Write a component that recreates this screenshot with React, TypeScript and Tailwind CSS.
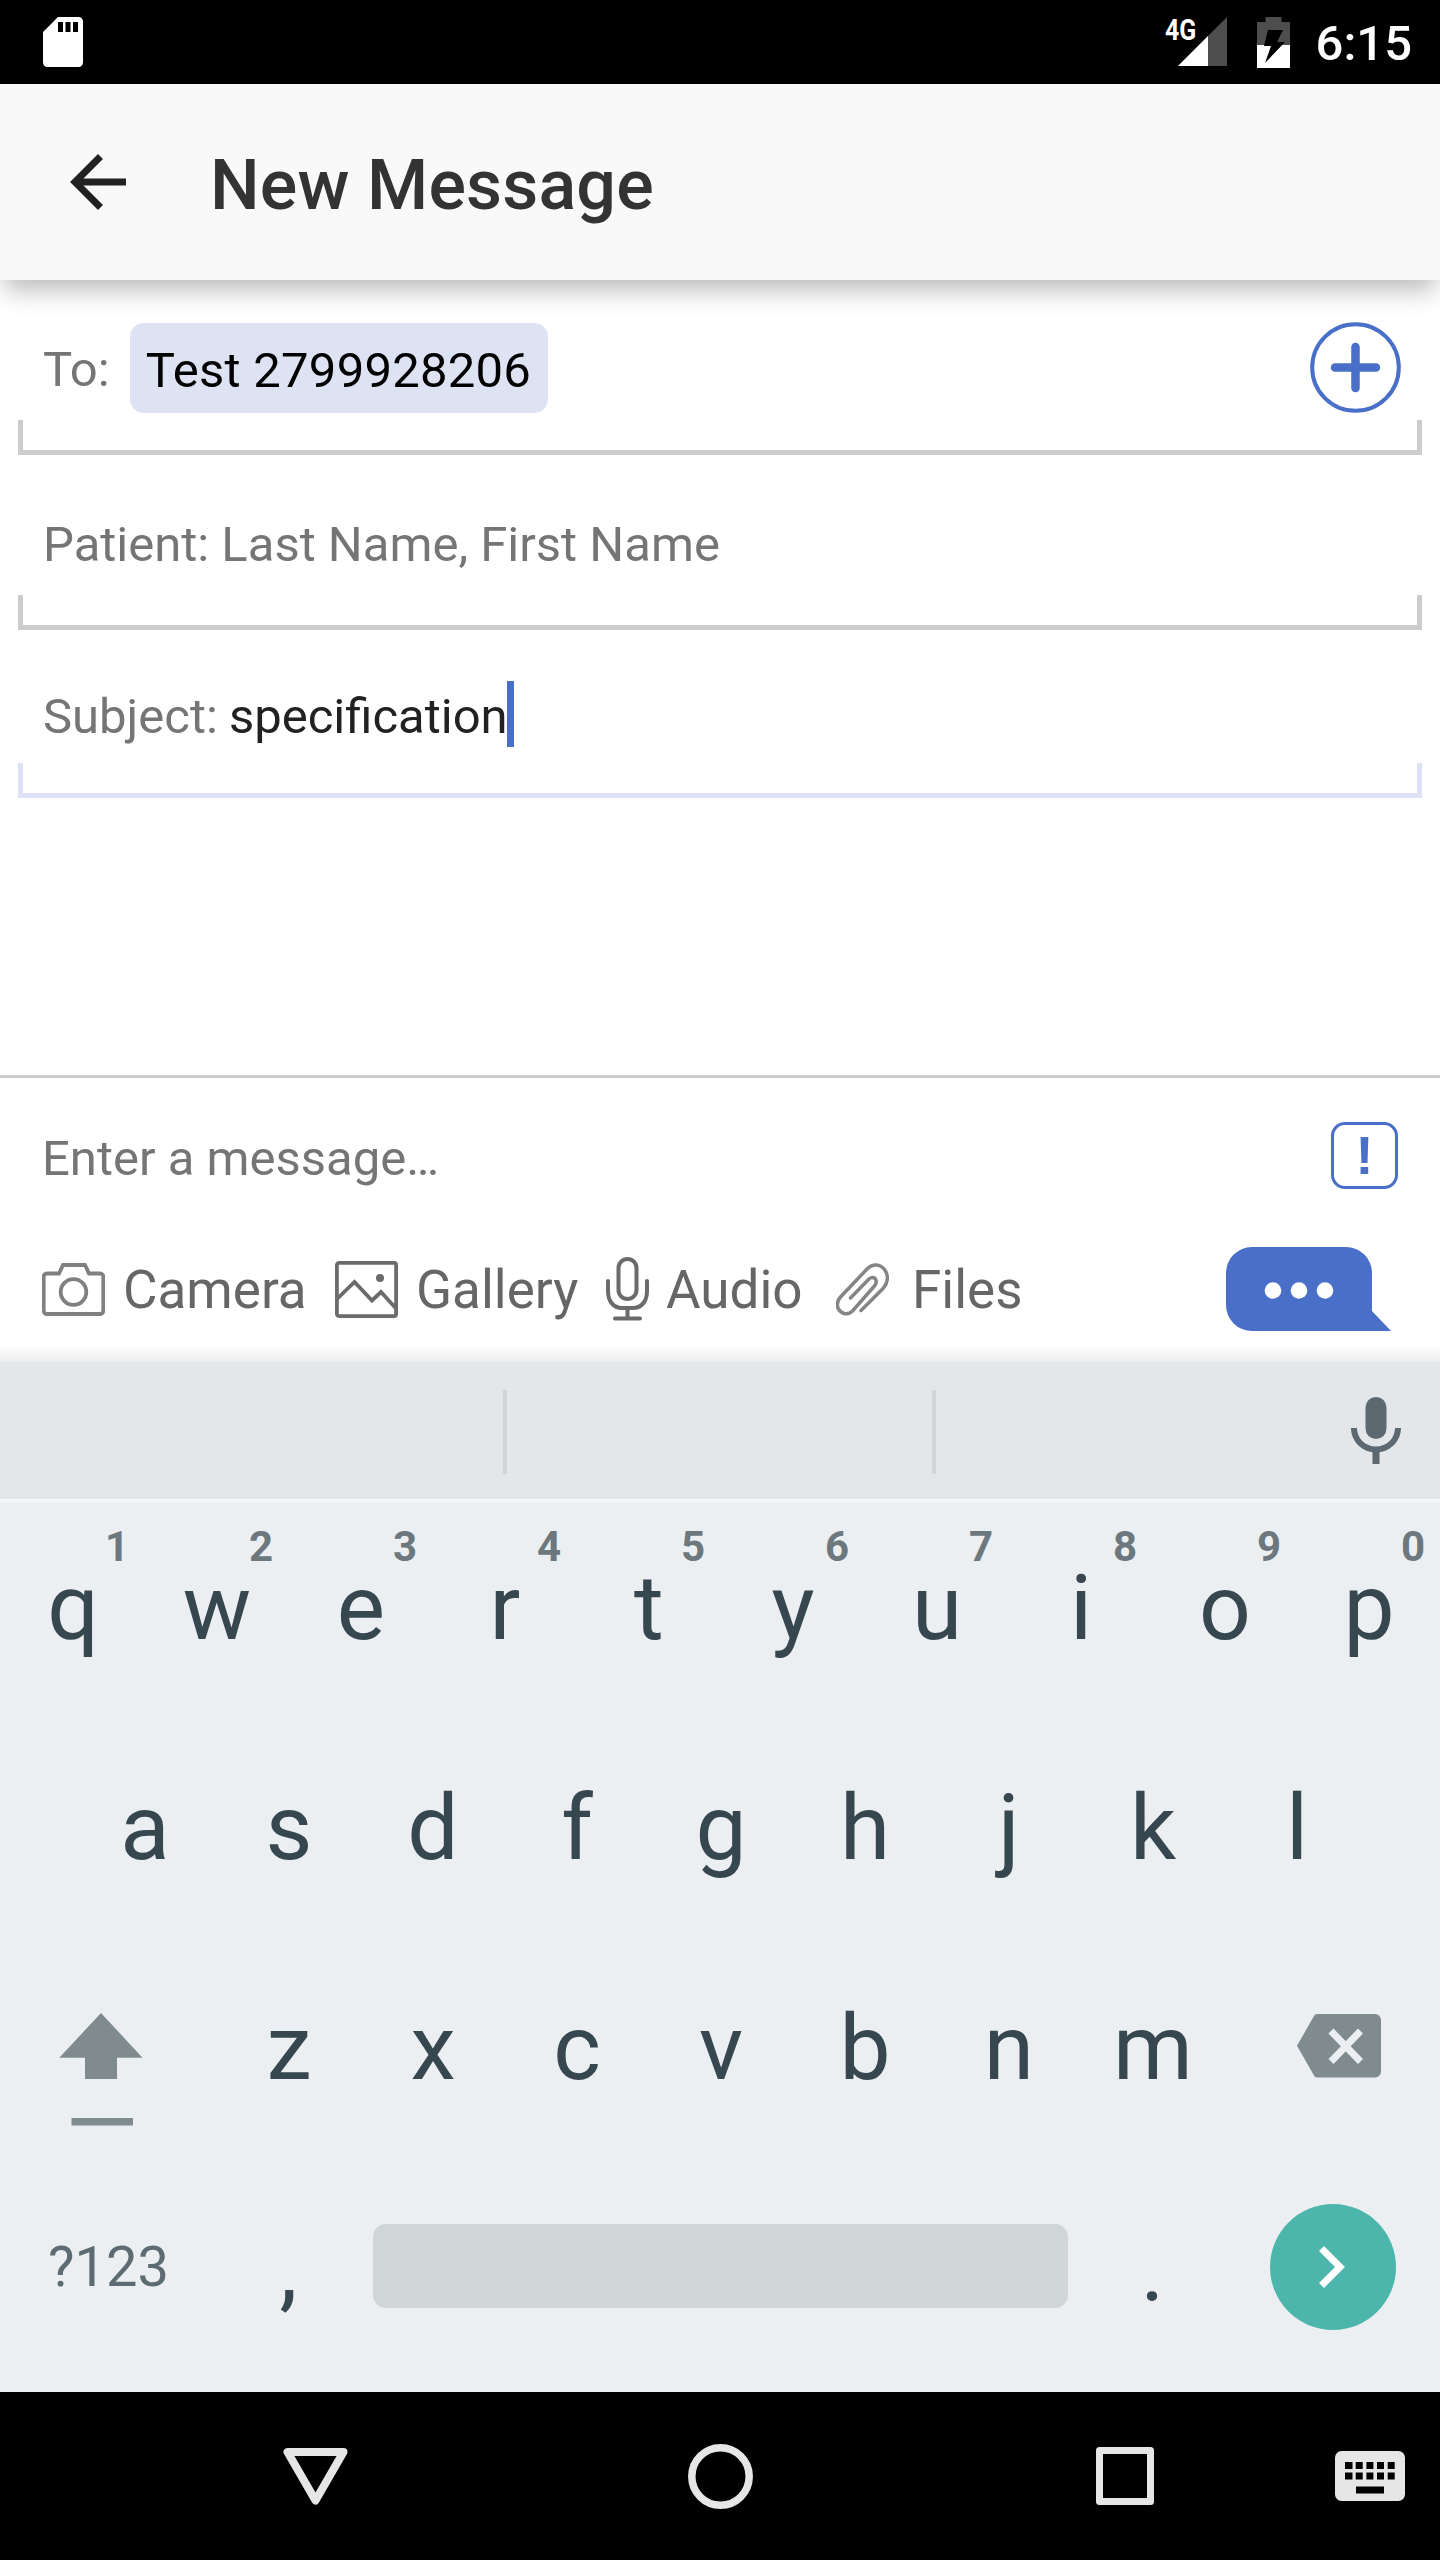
import type { ReactNode } from "react";

function StatusBar() {
  return (
    <div className="flex h-[84px] items-center bg-black pl-[43px] pr-[28px] text-white">
      <svg width="40" height="50" viewBox="0 0 40 50" fill="#fff">
        <path d="M15 0h20.500a4.500 4.500 0 0 1 4.500 4.500v41a4.500 4.500 0 0 1-4.500 4.500h-31a4.500 4.500 0 0 1-4.500-4.500V15z" />
        <path d="M15 5h5v10h-5zM22.500 5h5v10h-5zM30 5h5v10h-5z" fill="#000" />
      </svg>
      <div className="relative ml-auto h-[50px] w-[62px]">
        <span className="absolute left-0 top-0 origin-left scale-x-[0.83] text-[30px] font-bold leading-[26px]">4G</span>
        <svg className="absolute right-0 top-0" width="49" height="50" viewBox="0 0 49 50">
          <path d="M49 0v49H0z" fill="#4d4d4d" />
          <path d="M30 19v30H0z" fill="#fff" />
        </svg>
      </div>
      <svg className="ml-[30px]" width="33" height="51" viewBox="0 0 33 51">
        <path d="M8.500 0h16v5H33v23H0V5h8.500z" fill="#4d4d4d" />
        <path d="M0 28h33v23H0z" fill="#fff" />
        <path d="M11 13h15l-6 12h8L8 46l6-17H7z" fill="#000" />
      </svg>
      <span className="ml-[26px] pt-[4px] text-[49px] font-medium leading-[80px]">6:15</span>
    </div>
  );
}

function Header() {
  return (
    <header className="relative z-10 flex h-[196px] items-center bg-[#f9f9f9] pl-[70px] shadow-[0_14px_24px_-4px_rgba(0,0,0,0.27)]">
      <svg width="56" height="56" viewBox="0 0 56 56" fill="none" stroke="#212121" strokeWidth="7">
        <path d="M56 28H7M30.500 2.500L5 28l25.500 25.500" />
      </svg>
      <h1 className="ml-[84px] pt-[6px] text-[70px] font-medium leading-[80px] tracking-[0.150px] text-[#333]">New Message</h1>
    </header>
  );
}

function Field({ children, active = false }: { children: ReactNode; active?: boolean }) {
  return (
    <div className="px-[18px]">
      <div className={active ? "flex h-[133px] items-center px-[25px]" : "flex h-[140px] items-center px-[25px]"}>{children}</div>
      <div
        className={
          active
            ? "h-[35px] border-x-[5px] border-b-[5px] border-[#dde3f4]"
            : "h-[35px] border-x-[5px] border-b-[5px] border-[#ccc]"
        }
      />
    </div>
  );
}

function Fields() {
  return (
    <div className="text-[49px] leading-[66px] text-[#757575]">
      <Field>
        <span className="pt-[40px]">To:</span>
        <span className="ml-[20px] mt-[36px] h-[90px] w-[418px] rounded-[14px] bg-[#dee3f4] pl-[16px] pt-[5px] leading-[86px] tracking-[0.250px] text-black">
          Test 2799928206
        </span>
        <svg className="ml-auto mr-[-4px] mt-[34px]" width="91" height="91" viewBox="0 0 91 91" fill="none" stroke="#496fc8">
          <circle cx="45.500" cy="45.500" r="43.300" strokeWidth="4" />
          <path d="M45.500 25v41M25 45.500h41" strokeWidth="8.500" strokeLinecap="round" />
        </svg>
      </Field>
      <Field>
        <span className="pt-[39px]">Patient: Last Name, First Name</span>
      </Field>
      <Field active>
        <span className="pt-[40px]">Subject:</span>
        <span className="ml-[11px] pt-[40px] text-[#212121]">specification</span>
        <span className="-ml-px mt-[35px] h-[66px] w-[7px] bg-[#496fc8]" />
      </Field>
    </div>
  );
}

function CameraIcon() {
  return (
    <svg width="63" height="53" viewBox="0 0 63 53" fill="none" stroke="#808080" strokeWidth="3.800">
      <path d="M5 10.500h12l4-8.500h22l4 8.500h11a3.300 3.300 0 0 1 3.300 3.300v33.900a3.300 3.300 0 0 1-3.300 3.300H5a3.300 3.300 0 0 1-3.300-3.300V13.800A3.300 3.300 0 0 1 5 10.500z" />
      <circle cx="31.500" cy="29" r="12.800" />
    </svg>
  );
}

function GalleryIcon() {
  return (
    <svg width="63" height="57" viewBox="0 0 63 57" fill="none" stroke="#6b6b6b" strokeWidth="3.800">
      <rect x="1.900" y="1.900" width="59.200" height="53.200" rx="2" />
      <path d="M2 38l17.500-17L37 39.500l9-8.500 15.500 17" />
      <circle cx="45" cy="17" r="4" fill="#6b6b6b" stroke="none" />
    </svg>
  );
}

function AudioIcon() {
  return (
    <svg width="43" height="64" viewBox="0 0 43 64" fill="none" stroke="#6b6b6b" strokeWidth="4" strokeLinecap="round">
      <rect x="12.500" y="2" width="18" height="40" rx="9" />
      <path d="M2 24v10c0 12 7 17 14 17h11c7 0 14-5 14-17V24M21.500 51v10M9 61.500h25" />
    </svg>
  );
}

function ClipIcon() {
  return (
    <svg width="53" height="53" viewBox="0 0 53 53" fill="none" stroke="#858585" strokeWidth="3.500" strokeLinecap="round">
      <path d="M25 47.500L47.500 25c5-6 5-13 1-18.500C44 1 37 .500 31.500 5.500L4.500 34c-4 4.500-4 10-1 13.500 3.500 4 9 4.500 13 .500L38 23.500c4-4 2-9.500-2-9-1.500 0-2.500 1-3.500 2L14.500 35" />
    </svg>
  );
}

function Composer() {
  return (
    <div className="border-t-[3px] border-[#ccc]">
      <div className="flex h-[155px] items-center pl-[42px] pr-[42px]">
        <span className="pt-[6px] text-[49px] leading-[66px] text-[#757575]">Enter a message…</span>
        <span className="ml-auto flex h-[67px] w-[67px] justify-center rounded-[14px] border-[3.500px] border-[#496fc8] font-['Liberation_Sans',sans-serif] text-[54px] font-bold leading-[61px] text-[#496fc8]">
          !
        </span>
      </div>
      <div className="flex h-[112px] items-center pl-[42px] text-[53px] leading-[60px] text-[#666]">
        <CameraIcon />
        <span className="ml-[18px] w-[212px] pt-[2px]">Camera</span>
        <GalleryIcon />
        <span className="ml-[18px] w-[190px] pt-[2px]">Gallery</span>
        <AudioIcon />
        <span className="ml-[17px] w-[170px] pt-[2px]">Audio</span>
        <ClipIcon />
        <span className="ml-[23px] pt-[2px]">Files</span>
        <svg className="ml-auto mr-[49px]" width="165" height="84" viewBox="0 0 165 84" fill="#496fc8">
          <path d="M26 0h94a26 26 0 0 1 26 26v38l19 20H26A26 26 0 0 1 0 58V26A26 26 0 0 1 26 0z" />
          <g fill="#fff">
            <circle cx="47" cy="43.500" r="8.300" />
            <circle cx="73" cy="43.500" r="8.300" />
            <circle cx="99" cy="43.500" r="8.300" />
          </g>
        </svg>
      </div>
      <div className="h-[17px] bg-linear-to-b from-white to-[#ececec]" />
    </div>
  );
}

function Key({ label, hint }: { label: string; hint?: string }) {
  return (
    <div className="flex w-[144px] flex-col pl-[2px] text-center">
      {hint && <span className="mt-[25px] pr-[15px] text-right text-[42px] font-bold leading-[38px] text-[#6c787e]">{hint}</span>}
      <span className={hint ? "leading-[84px]" : "leading-[220px]"}>{label}</span>
    </div>
  );
}

function Keyboard() {
  return (
    <div className="h-[1030px] bg-[#ebeff2] text-[91px] text-[#37474f]">
      <div className="flex h-[137px] items-center bg-[#e3e7e9]">
        <span className="ml-[503px] mt-[3px] h-[84px] w-[4px] bg-[#d0d5d8]" />
        <span className="ml-[425px] mt-[3px] h-[84px] w-[4px] bg-[#d0d5d8]" />
        <svg className="ml-auto mr-[39px]" width="50" height="67" viewBox="0 0 50 67" fill="#5c6970">
          <rect x="14.500" y="0" width="21" height="42" rx="10.500" />
          <path d="M0 31h6c0 10.500 8.500 18.500 19 18.500S44 41.500 44 31h6c0 12.500-9.500 22.500-21.500 24.300V67h-7V55.300C9.500 53.500 0 43.500 0 31z" />
        </svg>
      </div>
      <div className="h-[4px] bg-[#f4f6f8]" />
      <div className="flex h-[215px]">
        {[..."qwertyuiop"].map((c, i) => (
          <Key key={c} label={c} hint={String((i + 1) % 10)} />
        ))}
      </div>
      <div className="flex h-[220px] justify-center">
        {[..."asdfghjkl"].map((c) => (
          <Key key={c} label={c} />
        ))}
      </div>
      <div className="flex h-[220px]">
        <svg width="216" height="220" viewBox="0 0 216 220" fill="#808b90">
          <path d="M101 75l41.500 44.700H117V141H85v-21.300H59.300zM71.500 180H133v7.500H71.500z" />
        </svg>
        {[..."zxcvbnm"].map((c) => (
          <Key key={c} label={c} />
        ))}
        <svg width="216" height="220" viewBox="0 0 216 220">
          <path d="M93 76h58a6 6 0 0 1 6 6v51.500a6 6 0 0 1-6 6H93c-1.500 0-2.500-1-3-2L73 107.800 90 78c.500-1 1.500-2 3-2z" fill="#808b90" />
          <path d="M107 93l29.500 30.500M136.500 93L107 123.500" stroke="#ebeff2" strokeWidth="7" />
        </svg>
      </div>
      <div className="flex h-[216px] items-center">
        <span className="w-[216px] pl-px pt-px text-center text-[56px] text-[#5d6c72]">?123</span>
        <span className="w-[144px] pl-px pt-[6px] text-center leading-[100px]">,</span>
        <span className="mx-[13px] h-[84px] w-[695px] rounded-[13px] bg-[#d0d5d8]" />
        <span className="w-[143px] pt-[6px] text-center leading-[100px]">.</span>
        <span className="flex w-[216px] justify-center pl-[2px] pt-px">
          <svg width="126" height="126" viewBox="0 0 126 126">
            <circle cx="63" cy="63" r="63" fill="#4db6ac" />
            <path d="M51.500 44.500L70 63 51.500 81.500" fill="none" stroke="#fff" strokeWidth="7" />
          </svg>
        </span>
      </div>
    </div>
  );
}

function NavBar() {
  return (
    <div className="flex h-[168px] items-center bg-black pl-[283px] pr-[35px]">
      <svg width="65" height="57" viewBox="0 0 65 57" fill="none" stroke="#e6e6e6" strokeWidth="8" strokeLinejoin="round">
        <path d="M4.500 4h56L32.500 52.500z" />
      </svg>
      <svg className="ml-[340px]" width="65" height="65" viewBox="0 0 65 65" fill="none" stroke="#e6e6e6" strokeWidth="7.500">
        <circle cx="32.500" cy="32.500" r="28.700" />
      </svg>
      <svg className="ml-[343px]" width="58" height="58" viewBox="0 0 58 58" fill="none" stroke="#e6e6e6" strokeWidth="7">
        <path d="M3.500 3.500h51v51h-51z" strokeLinejoin="round" />
      </svg>
      <svg className="ml-auto" width="70" height="50" viewBox="0 0 70 50">
        <rect width="70" height="50" rx="6.500" fill="#e6e6e6" />
        <path
          d="M10 11h7.500v7H10zM20.700 11h7v7h-7zM31.400 11h7v7h-7zM42 11h7v7h-7zM52.700 11h7v7h-7zM10 21.500h7.500v7H10zM20.700 21.500h7v7h-7zM31.400 21.500h7v7h-7zM42 21.500h7v7h-7zM52.700 21.500h7v7h-7zM21 35.500h28v7H21z"
          fill="#000"
        />
      </svg>
    </div>
  );
}

export default function App() {
  return (
    <div className="flex h-[2560px] w-[1440px] flex-col overflow-hidden bg-white font-[Roboto,sans-serif]">
      <StatusBar />
      <Header />
      <Fields />
      <div className="flex-1" />
      <Composer />
      <Keyboard />
      <NavBar />
    </div>
  );
}
